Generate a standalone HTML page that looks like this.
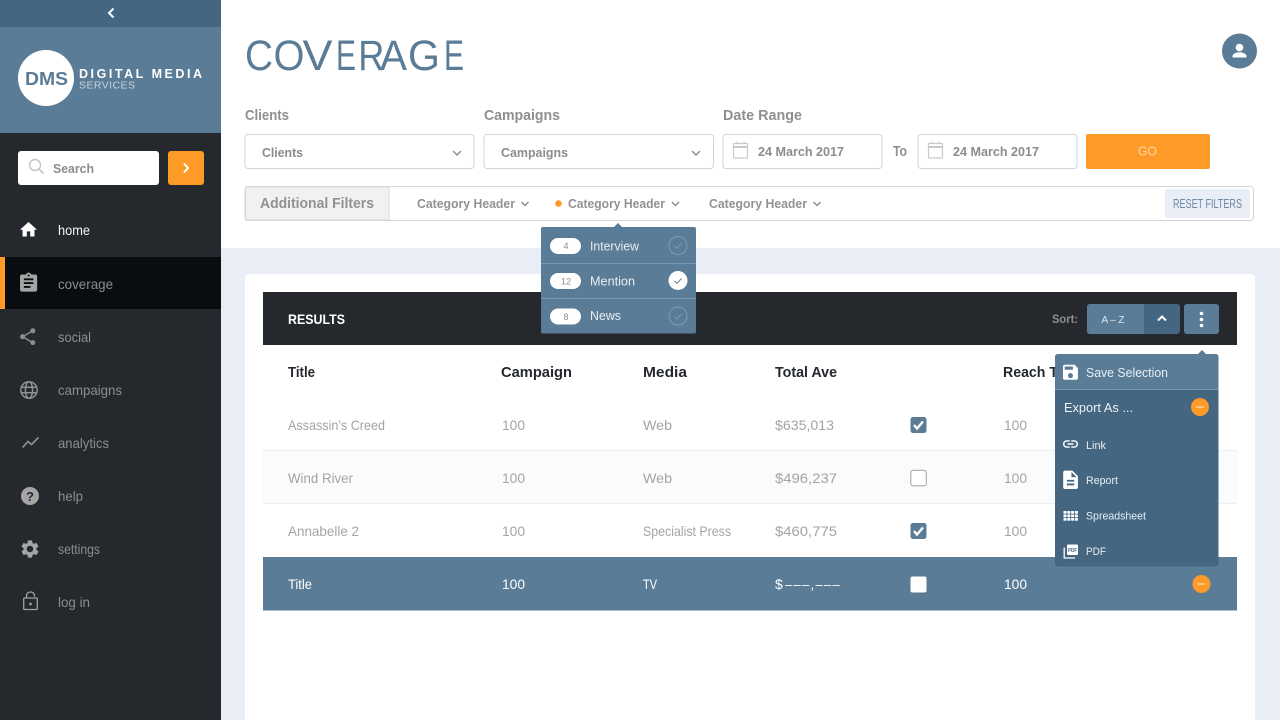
<!DOCTYPE html>
<html lang="en">
<head>
<meta charset="utf-8">
<title>Coverage</title>
<style>
html,body{margin:0;padding:0;width:1280px;height:720px;overflow:hidden;background:#fff}
svg{display:block}
text{font-family:"Liberation Sans",sans-serif;white-space:pre}
.nav{font-size:14px;fill:#8b8d8f}
.lab{font-size:15px;font-weight:bold;fill:#8f8f8f}
.sel{font-size:13px;font-weight:bold;fill:#8c8c8c}
.cat{font-size:12.5px;font-weight:bold;fill:#929292}
.th{font-size:15px;font-weight:bold;fill:#25292e}
.td{font-size:14px;fill:#a4a4a4}
.tw{font-size:14px;fill:#fff}
.dd{font-size:12.5px;fill:#e8eef3}
.pill{font-size:9px;fill:#8d8d8d;text-anchor:middle}
.box{fill:#fff;stroke:#d4d4d4;stroke-width:1}
.chev{fill:none;stroke:#8f8f8f;stroke-width:1.5}
.ck{fill:none;stroke:#fff;stroke-width:2.4}
</style>
</head>
<body>
<svg width="1280" height="720" viewBox="0 0 1280 720" xmlns="http://www.w3.org/2000/svg">
<!-- page -->
<rect width="1280" height="720" fill="#fff"/>
<rect x="221" y="248" width="1059" height="472" fill="#e9edf5"/>
<rect x="245" y="274" width="1010" height="460" rx="4" fill="#fff"/>

<!-- sidebar -->
<rect width="221" height="720" fill="#25292e"/>
<rect width="221" height="27" fill="#446681"/>
<rect y="27" width="221" height="106" fill="#5a7c97"/>
<path d="M113.500 8.500 L109 13 L113.500 17.500" fill="none" stroke="#fff" stroke-width="2"/>
<circle cx="46" cy="78" r="28" fill="#fff"/>
<text x="25" y="85" font-size="18" font-weight="bold" fill="#5a7c97" textLength="43" lengthAdjust="spacingAndGlyphs">DMS</text>
<text x="79" y="78" font-size="12.5" font-weight="bold" fill="#fff" textLength="123" lengthAdjust="spacing">DIGITAL MEDIA</text>
<text x="79" y="88.500" font-size="10.500" fill="#c6d3dd" textLength="56" lengthAdjust="spacing">SERVICES</text>

<rect x="18" y="151" width="141" height="34" rx="3" fill="#fff"/>
<circle cx="35" cy="165" r="5.500" fill="none" stroke="#c4c4c4" stroke-width="1.400"/>
<path d="M39 169 L43.500 173.500" stroke="#c4c4c4" stroke-width="1.600"/>
<text x="53" y="173" class="sel" textLength="41" lengthAdjust="spacingAndGlyphs">Search</text>
<rect x="168" y="151" width="36" height="34" rx="3" fill="#fd9a28"/>
<path d="M184 163.500 L188 168 L184 172.500" fill="none" stroke="#fff" stroke-width="2"/>

<rect y="257" width="221" height="52" fill="#0a0d0f"/>
<rect y="257" width="5" height="52" fill="#fd9a28"/>

<path transform="translate(18.300 219.500) scale(.85)" fill="#fff" d="M10 20v-6h4v6h5v-8h3L12 3 2 12h3v8z"/>
<text x="58" y="235" class="nav" style="fill:#f2f2f2" textLength="32" lengthAdjust="spacingAndGlyphs">home</text>

<path transform="translate(17.200 271.700) scale(.95)" fill="#a5a5a5" d="M19 3h-4.180C14.400 1.840 13.300 1 12 1c-1.300 0-2.400.840-2.820 2H5c-1.100 0-2 .900-2 2v14c0 1.100.900 2 2 2h14c1.100 0 2-.900 2-2V5c0-1.100-.900-2-2-2zm-7 0c.550 0 1 .450 1 1s-.450 1-1 1-1-.450-1-1 .450-1 1-1zm2 14H7v-2h7v2zm3-4H7v-2h10v2zm0-4H7V7h10v2z"/>
<text x="58" y="289" class="nav" textLength="55" lengthAdjust="spacingAndGlyphs">coverage</text>

<path transform="translate(17.500 326.500) scale(.85)" fill="#8b8d8f" d="M18 16.080c-.760 0-1.440.300-1.960.770L8.910 12.700c.050-.230.090-.460.090-.700s-.040-.470-.090-.700l7.050-4.110c.540.500 1.250.810 2.040.810 1.660 0 3-1.340 3-3s-1.340-3-3-3-3 1.340-3 3c0 .240.040.470.090.700L8.040 9.810C7.500 9.310 6.790 9 6 9c-1.660 0-3 1.340-3 3s1.340 3 3 3c.790 0 1.500-.310 2.040-.810l7.120 4.160c-.050.210-.080.430-.080.650 0 1.610 1.310 2.920 2.920 2.920 1.610 0 2.920-1.310 2.920-2.920s-1.310-2.920-2.920-2.920z"/>
<text x="58" y="342" class="nav" textLength="33" lengthAdjust="spacingAndGlyphs">social</text>

<g fill="none" stroke="#8f9193" stroke-width="1.500">
<circle cx="29" cy="390" r="8.200"/>
<ellipse cx="29" cy="390" rx="3.600" ry="8.200"/>
<path d="M21 387.300H37M21 392.700H37"/>
</g>
<text x="58" y="395" class="nav" textLength="64" lengthAdjust="spacingAndGlyphs">campaigns</text>

<path d="M22.500 447.500 L28 441.500 L31.500 444.500 L38.500 437.500" fill="none" stroke="#8f9193" stroke-width="1.600"/>
<text x="58" y="448" class="nav" textLength="51" lengthAdjust="spacingAndGlyphs">analytics</text>

<circle cx="30" cy="496" r="9" fill="#a5a5a5"/>
<text x="30" y="501" text-anchor="middle" font-size="13" font-weight="bold" fill="#25292e">?</text>
<text x="58" y="501" class="nav" textLength="25" lengthAdjust="spacingAndGlyphs">help</text>

<path transform="translate(19.200 538.200) scale(.9)" fill="#a5a5a5" d="M19.140 12.940c.040-.300.060-.610.060-.940 0-.320-.020-.640-.070-.940l2.030-1.580c.180-.140.230-.410.120-.610l-1.920-3.320c-.120-.220-.370-.290-.590-.220l-2.390.960c-.500-.380-1.030-.700-1.620-.940l-.360-2.540c-.040-.240-.240-.410-.480-.410h-3.840c-.240 0-.430.170-.470.410l-.360 2.540c-.590.240-1.130.570-1.620.940l-2.390-.960c-.220-.080-.470 0-.590.220L2.740 8.870c-.120.210-.080.470.120.610l2.030 1.580c-.050.300-.090.630-.090.940s.020.640.070.940l-2.030 1.580c-.180.140-.230.410-.12.610l1.920 3.320c.120.220.370.290.590.220l2.390-.960c.500.380 1.030.700 1.620.940l.360 2.540c.050.240.240.410.480.410h3.840c.240 0 .440-.170.470-.410l.360-2.540c.590-.240 1.130-.560 1.620-.940l2.390.960c.220.080.470 0 .590-.220l1.920-3.320c.120-.220.070-.470-.120-.610l-2.010-1.580zM12 15.600c-1.980 0-3.600-1.620-3.600-3.600s1.620-3.600 3.600-3.600 3.600 1.620 3.600 3.600-1.620 3.600-3.600 3.600z"/>
<text x="58" y="554" class="nav" textLength="42" lengthAdjust="spacingAndGlyphs">settings</text>

<g fill="none" stroke="#a0a0a0" stroke-width="1.300">
<rect x="23.700" y="598" width="13.600" height="11.500" rx="1"/>
<path d="M26.500 598 V595.500 A4 3.500 0 0 1 34.500 595.500 V596.500"/>
</g>
<circle cx="30.500" cy="604" r="1.400" fill="#a0a0a0"/>
<text x="58" y="607" class="nav" textLength="32" lengthAdjust="spacingAndGlyphs">log in</text>

<!-- header -->
<text y="70" font-size="42.500" fill="#5a7c97"><tspan x="245" textLength="28" lengthAdjust="spacingAndGlyphs">C</tspan><tspan x="273.500" textLength="31" lengthAdjust="spacingAndGlyphs">O</tspan><tspan x="302.500" textLength="30" lengthAdjust="spacingAndGlyphs">V</tspan><tspan x="336" textLength="20" lengthAdjust="spacingAndGlyphs">E</tspan><tspan x="358.300" textLength="26" lengthAdjust="spacingAndGlyphs">R</tspan><tspan x="380" textLength="27" lengthAdjust="spacingAndGlyphs">A</tspan><tspan x="408" textLength="32" lengthAdjust="spacingAndGlyphs">G</tspan><tspan x="444" textLength="20" lengthAdjust="spacingAndGlyphs">E</tspan></text>
<circle cx="1239.500" cy="51" r="17.500" fill="#5a7c97"/>
<circle cx="1239.500" cy="47.500" r="3.800" fill="#fff"/>
<path d="M1232.500 57.500 v-1.300 c0-2.600 4.500-3.900 7-3.900 s7 1.300 7 3.900 v1.300 z" fill="#fff"/>

<!-- filters -->
<text x="245" y="120" class="lab" textLength="44" lengthAdjust="spacingAndGlyphs">Clients</text>
<text x="484" y="120" class="lab" textLength="76" lengthAdjust="spacingAndGlyphs">Campaigns</text>
<text x="723" y="120" class="lab" textLength="79" lengthAdjust="spacingAndGlyphs">Date Range</text>

<rect x="245" y="134.500" width="229" height="34" rx="3" class="box"/>
<text x="262" y="157" class="sel" textLength="41" lengthAdjust="spacingAndGlyphs">Clients</text>
<path d="M453 151 L457 155 L461 151" class="chev"/>
<rect x="484" y="134.500" width="229.500" height="34" rx="3" class="box"/>
<text x="501" y="157" class="sel" textLength="67" lengthAdjust="spacingAndGlyphs">Campaigns</text>
<path d="M692 151 L696 155 L700 151" class="chev"/>

<rect x="723" y="134.500" width="159" height="34" rx="3" class="box"/>
<g fill="none" stroke="#c9c9c9" stroke-width="1.200">
<rect x="733.500" y="143.500" width="14" height="14.500" rx="1"/>
<path d="M733.500 147H747.500" stroke-width="2"/>
<path d="M737 141.500v2.500M744 141.500v2.500"/>
</g>
<text x="758" y="156" class="sel" textLength="86" lengthAdjust="spacingAndGlyphs">24 March 2017</text>
<text x="893" y="156" class="lab" textLength="14" lengthAdjust="spacingAndGlyphs">To</text>
<rect x="918" y="134.500" width="159" height="34" rx="3" class="box"/>
<g fill="none" stroke="#c9c9c9" stroke-width="1.200">
<rect x="928.500" y="143.500" width="14" height="14.500" rx="1"/>
<path d="M928.500 147H942.500" stroke-width="2"/>
<path d="M932 141.500v2.500M939 141.500v2.500"/>
</g>
<text x="953" y="156" class="sel" textLength="86" lengthAdjust="spacingAndGlyphs">24 March 2017</text>
<rect x="1086" y="134" width="124" height="35" rx="2" fill="#fd9a28"/>
<text x="1138" y="155.500" font-size="12.500" fill="#fdd9a8" textLength="19" lengthAdjust="spacingAndGlyphs">GO</text>

<rect x="245" y="186.500" width="1008.500" height="34" rx="3" class="box"/>
<path d="M248 187 H389 V220 H248 a2.500 2.500 0 0 1 -2.500 -2.500 V189.500 a2.500 2.500 0 0 1 2.500 -2.500z" fill="#f1f1f1" stroke="#d9d9d9"/>
<text x="260" y="208" font-size="15" font-weight="bold" fill="#929292" textLength="114" lengthAdjust="spacingAndGlyphs">Additional Filters</text>
<text x="417" y="208" class="cat" textLength="98" lengthAdjust="spacingAndGlyphs">Category Header</text>
<path d="M521.500 202 L525 205.500 L528.500 202" class="chev"/>
<circle cx="558.500" cy="203.500" r="3.300" fill="#fd9a28"/>
<text x="568" y="208" class="cat" textLength="97" lengthAdjust="spacingAndGlyphs">Category Header</text>
<path d="M672 202 L675.500 205.500 L679 202" class="chev"/>
<text x="709" y="208" class="cat" textLength="98" lengthAdjust="spacingAndGlyphs">Category Header</text>
<path d="M813.500 202 L817 205.500 L820.500 202" class="chev"/>
<rect x="1165" y="189" width="85" height="29" rx="3" fill="#e9edf5"/>
<text x="1173" y="208" font-size="12.500" fill="#6f8aa0" textLength="69" lengthAdjust="spacingAndGlyphs">RESET FILTERS</text>

<!-- results -->
<rect x="263" y="292" width="974" height="53" fill="#25292e"/>
<text x="288" y="324" font-size="14" font-weight="bold" fill="#fff" textLength="57" lengthAdjust="spacingAndGlyphs">RESULTS</text>
<text x="1052" y="323" font-size="12" font-weight="bold" fill="#8e8f90" textLength="26" lengthAdjust="spacingAndGlyphs">Sort:</text>
<rect x="1087" y="304" width="93" height="30" rx="3" fill="#446681"/>
<path d="M1090 304 H1144 V334 H1090 a3 3 0 0 1 -3 -3 V307 a3 3 0 0 1 3 -3z" fill="#5a7c97"/>
<text x="1101.500" y="323" font-size="10" fill="#dfe6ec" textLength="23" lengthAdjust="spacing">A – Z</text>
<path d="M1158 320.500 L1162 316.500 L1166 320.500" fill="none" stroke="#fff" stroke-width="2"/>
<rect x="1184" y="304" width="35" height="30" rx="3" fill="#5a7c97"/>
<circle cx="1201.500" cy="313.500" r="1.800" fill="#fff"/><circle cx="1201.500" cy="319.500" r="1.800" fill="#fff"/><circle cx="1201.500" cy="325.500" r="1.800" fill="#fff"/>

<text x="288" y="377" class="th" textLength="27" lengthAdjust="spacingAndGlyphs">Title</text>
<text x="501" y="377" class="th" textLength="71" lengthAdjust="spacingAndGlyphs">Campaign</text>
<text x="643" y="377" class="th" textLength="44" lengthAdjust="spacingAndGlyphs">Media</text>
<text x="775" y="377" class="th" textLength="62" lengthAdjust="spacingAndGlyphs">Total Ave</text>
<text x="1003" y="377" class="th" textLength="55" lengthAdjust="spacingAndGlyphs">Reach T</text>

<rect x="263" y="451" width="974" height="53" fill="#fafbfc"/>
<path d="M263 450.500H1237M263 503.500H1237" stroke="#eeeeee"/>

<text x="288" y="430" class="td" textLength="97" lengthAdjust="spacingAndGlyphs">Assassin’s Creed</text>
<text x="502" y="430" class="td" textLength="23" lengthAdjust="spacingAndGlyphs">100</text>
<text x="643" y="430" class="td" textLength="29" lengthAdjust="spacingAndGlyphs">Web</text>
<text x="775" y="430" class="td" textLength="59" lengthAdjust="spacingAndGlyphs">$635,013</text>
<text x="1004" y="430" class="td" textLength="23" lengthAdjust="spacingAndGlyphs">100</text>

<text x="288" y="483" class="td" textLength="65" lengthAdjust="spacingAndGlyphs">Wind River</text>
<text x="502" y="483" class="td" textLength="23" lengthAdjust="spacingAndGlyphs">100</text>
<text x="643" y="483" class="td" textLength="29" lengthAdjust="spacingAndGlyphs">Web</text>
<text x="775" y="483" class="td" textLength="62" lengthAdjust="spacingAndGlyphs">$496,237</text>
<text x="1004" y="483" class="td" textLength="23" lengthAdjust="spacingAndGlyphs">100</text>

<text x="288" y="536" class="td" textLength="71" lengthAdjust="spacingAndGlyphs">Annabelle 2</text>
<text x="502" y="536" class="td" textLength="23" lengthAdjust="spacingAndGlyphs">100</text>
<text x="643" y="536" class="td" textLength="88" lengthAdjust="spacingAndGlyphs">Specialist Press</text>
<text x="775" y="536" class="td" textLength="62" lengthAdjust="spacingAndGlyphs">$460,775</text>
<text x="1004" y="536" class="td" textLength="23" lengthAdjust="spacingAndGlyphs">100</text>

<rect x="263" y="557" width="974" height="53.500" fill="#5a7c97"/>
<text x="288" y="589" class="tw" textLength="24" lengthAdjust="spacingAndGlyphs">Title</text>
<text x="502" y="589" class="tw" textLength="23" lengthAdjust="spacingAndGlyphs">100</text>
<text x="643" y="589" class="tw" textLength="14" lengthAdjust="spacingAndGlyphs">TV</text>
<text y="589" class="tw"><tspan x="775">$</tspan><tspan font-size="13" y="589" x="785 793.500 802 810.500 815.500 824 832.500">–––,–––</tspan></text>
<text x="1004" y="589" class="tw" textLength="23" lengthAdjust="spacingAndGlyphs">100</text>

<!-- checkboxes -->
<rect x="910.500" y="417" width="16" height="16" rx="2.500" fill="#5a7c97"/>
<path d="M914 425 L917 428.500 L923 421.500" class="ck"/>
<rect x="910.800" y="470.300" width="15.500" height="15.500" rx="2.500" fill="#fff" stroke="#a8a8a8" stroke-width="1.100"/>
<rect x="910.500" y="523" width="16" height="16" rx="2.500" fill="#5a7c97"/>
<path d="M914 531 L917 534.500 L923 527.500" class="ck"/>
<rect x="910.500" y="576.500" width="16" height="16" rx="2" fill="#fff"/>

<circle cx="1201.500" cy="584" r="9" fill="#fd9a28"/>
<path d="M1197.500 584H1205.500" stroke="#fdd9a8" stroke-width="1.300"/>

<!-- dropdown -->
<path d="M613.500 227.500 L618 223 L622.500 227.500z" fill="#5a7c97"/>
<rect x="541" y="227" width="155" height="106.500" rx="2" fill="#5a7c97"/>
<path d="M541 263.500H696M541 298.500H696" stroke="#7a97ad"/>
<rect x="550" y="238" width="31" height="16" rx="8" fill="#fff"/>
<text x="566" y="249" class="pill">4</text>
<text x="590" y="250.500" class="dd" textLength="49" lengthAdjust="spacingAndGlyphs">Interview</text>
<circle cx="678" cy="245.500" r="9" fill="none" stroke="#7f9bb0" stroke-width="1"/>
<path d="M674.500 246 L677 248.300 L681.500 243.500" fill="none" stroke="#7f9bb0" stroke-width="1"/>
<rect x="550" y="273" width="31" height="16" rx="8" fill="#fff"/>
<text x="566" y="284.500" class="pill">12</text>
<text x="590" y="285.500" class="dd" textLength="45" lengthAdjust="spacingAndGlyphs">Mention</text>
<circle cx="678" cy="280.500" r="9.500" fill="#fff"/>
<path d="M674.500 281 L677 283.300 L681.500 278.500" fill="none" stroke="#5a7c97" stroke-width="1"/>
<rect x="550" y="308.500" width="31" height="16" rx="8" fill="#fff"/>
<text x="566" y="320" class="pill">8</text>
<text x="590" y="320" class="dd" textLength="31" lengthAdjust="spacingAndGlyphs">News</text>
<circle cx="678" cy="316" r="9" fill="none" stroke="#7f9bb0" stroke-width="1"/>
<path d="M674.500 316.500 L677 318.800 L681.500 314" fill="none" stroke="#7f9bb0" stroke-width="1"/>

<!-- menu -->
<path d="M1197.500 354.500 L1202 350 L1206.500 354.500z" fill="#5a7c97"/>
<rect x="1055" y="354" width="163.500" height="212.500" rx="3" fill="#446681"/>
<path d="M1058 354 H1215.500 a3 3 0 0 1 3 3 V389.500 H1055 V357 a3 3 0 0 1 3 -3z" fill="#5a7c97"/>
<path d="M1055 389.500H1218.500" stroke="#7a97ad"/>
<path transform="translate(1060.500 362.300) scale(.83)" fill="#fff" d="M17 3H5c-1.110 0-2 .900-2 2v14c0 1.100.890 2 2 2h14c1.100 0 2-.900 2-2V7l-4-4zm-5 16c-1.660 0-3-1.340-3-3s1.340-3 3-3 3 1.340 3 3-1.340 3-3 3zm3-10H5V5h10v4z"/>
<text x="1086" y="377" class="dd" textLength="82" lengthAdjust="spacingAndGlyphs">Save Selection</text>
<text x="1064" y="412" font-size="12.500" fill="#eef2f5" textLength="69" lengthAdjust="spacingAndGlyphs">Export As ...</text>
<circle cx="1200" cy="407" r="9" fill="#fd9a28"/>
<path d="M1196 407H1204" stroke="#fdd9a8" stroke-width="1.300"/>
<path transform="translate(1061.500 435) scale(.75)" fill="#fff" d="M3.900 12c0-1.710 1.390-3.100 3.100-3.100h4V7H7c-2.760 0-5 2.240-5 5s2.240 5 5 5h4v-1.900H7c-1.710 0-3.100-1.390-3.100-3.100zM8 13h8v-2H8v2zm9-6h-4v1.900h4c1.710 0 3.100 1.390 3.100 3.100s-1.390 3.100-3.100 3.100h-4V17h4c2.760 0 5-2.240 5-5s-2.240-5-5-5z"/>
<text x="1086" y="449" font-size="11" fill="#e8eef3" textLength="20" lengthAdjust="spacingAndGlyphs">Link</text>
<path transform="translate(1059.500 468.800) scale(.92)" fill="#fff" d="M14 2H6c-1.100 0-1.990.900-1.990 2L4 20c0 1.100.890 2 1.990 2H18c1.100 0 2-.900 2-2V8l-6-6zm2 16H8v-2h8v2zm0-4H8v-2h8v2zm-3-5V3.500L18.500 9H13z"/>
<text x="1086" y="484" font-size="11" fill="#e8eef3" textLength="32" lengthAdjust="spacingAndGlyphs">Report</text>
<g fill="#fff">
<rect x="1063.500" y="511" width="3" height="2.700"/><rect x="1067.300" y="511" width="3" height="2.700"/><rect x="1071.100" y="511" width="3" height="2.700"/><rect x="1074.900" y="511" width="3" height="2.700"/>
<rect x="1063.500" y="514.500" width="3" height="2.700"/><rect x="1067.300" y="514.500" width="3" height="2.700"/><rect x="1071.100" y="514.500" width="3" height="2.700"/><rect x="1074.900" y="514.500" width="3" height="2.700"/>
<rect x="1063.500" y="518" width="3" height="2.700"/><rect x="1067.300" y="518" width="3" height="2.700"/><rect x="1071.100" y="518" width="3" height="2.700"/><rect x="1074.900" y="518" width="3" height="2.700"/>
</g>
<text x="1086" y="519.500" font-size="11" fill="#e8eef3" textLength="60" lengthAdjust="spacingAndGlyphs">Spreadsheet</text>
<rect x="1067" y="544.500" width="11" height="10.500" rx="1" fill="#fff"/>
<text x="1068" y="552" font-size="5" font-weight="bold" fill="#446681" textLength="9" lengthAdjust="spacingAndGlyphs">PDF</text>
<path d="M1064.200 547.500 V558 H1075" fill="none" stroke="#fff" stroke-width="1.300"/>
<text x="1086" y="555" font-size="11" fill="#e8eef3" textLength="20" lengthAdjust="spacingAndGlyphs">PDF</text>
</svg>
</body>
</html>
